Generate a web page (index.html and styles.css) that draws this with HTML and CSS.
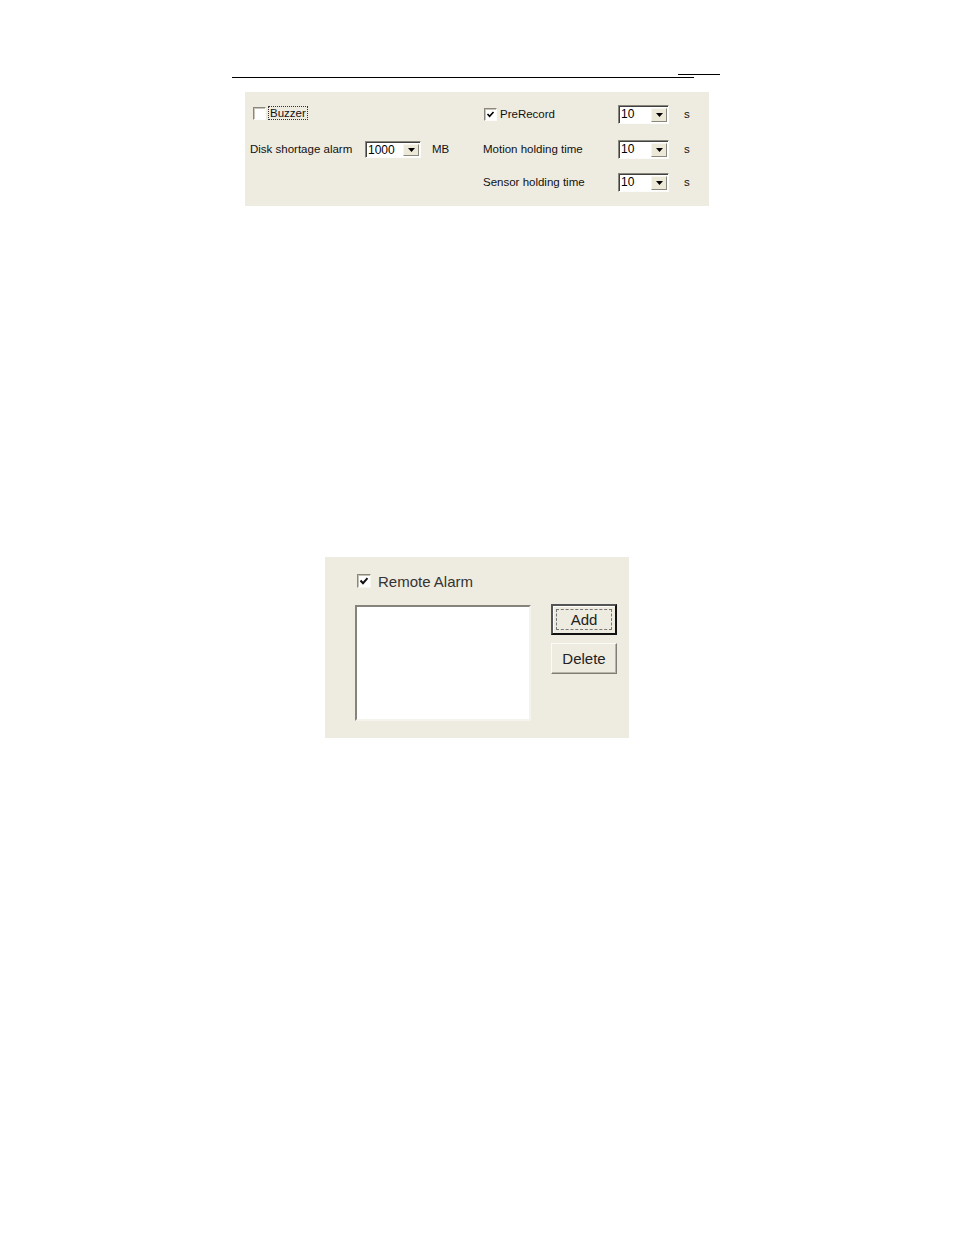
FILE: index.html
```html
<!DOCTYPE html>
<html>
<head>
<meta charset="utf-8">
<link rel="stylesheet" href="styles.css">
</head>
<body>
<div class="page">
  <div class="rules">
    <div class="rule-short"></div>
    <div class="rule-long"></div>
  </div>

  <div class="panel1">
    <div class="col-left">
      <div class="row row-buzzer">
        <span class="cb"></span>
        <span class="lbl focus">Buzzer</span>
      </div>
      <div class="row row-disk">
        <span class="lbl wide-l">Disk shortage alarm</span>
        <span class="combo combo-l"><span class="combo-val">1000</span><span class="combo-btn"><svg width="7" height="4" viewBox="0 0 7 4"><path d="M0 0H7L3.5 4Z" fill="#000"/></svg></span></span>
        <span class="unit unit-mb">MB</span>
      </div>
    </div>
    <div class="col-right">
      <div class="row row-r1">
        <span class="lbl wide-r"><span class="cb cb-checked"><svg width="9" height="9" viewBox="0 0 9 9"><path d="M1.5 4 L3.6 6.3 L7.5 2" stroke="#000" stroke-width="1.6" fill="none"/></svg></span><span class="cb-text">PreRecord</span></span>
        <span class="combo combo-r"><span class="combo-val">10</span><span class="combo-btn"><svg width="7" height="4" viewBox="0 0 7 4"><path d="M0 0H7L3.5 4Z" fill="#000"/></svg></span></span>
        <span class="unit">s</span>
      </div>
      <div class="row row-r2">
        <span class="lbl wide-r">Motion holding time</span>
        <span class="combo combo-r"><span class="combo-val">10</span><span class="combo-btn"><svg width="7" height="4" viewBox="0 0 7 4"><path d="M0 0H7L3.5 4Z" fill="#000"/></svg></span></span>
        <span class="unit">s</span>
      </div>
      <div class="row row-r3">
        <span class="lbl wide-r">Sensor holding time</span>
        <span class="combo combo-r"><span class="combo-val">10</span><span class="combo-btn"><svg width="7" height="4" viewBox="0 0 7 4"><path d="M0 0H7L3.5 4Z" fill="#000"/></svg></span></span>
        <span class="unit">s</span>
      </div>
    </div>
  </div>

  <div class="panel2">
    <div class="remote-row">
      <span class="cb2"><svg width="10" height="10" viewBox="0 0 10 10"><path d="M1.5 4.5 L4 7.2 L8.5 2.2" stroke="#111" stroke-width="2" fill="none"/></svg></span>
      <span class="remote-lbl">Remote Alarm</span>
    </div>
    <div class="remote-main">
      <div class="listbox"></div>
      <div class="btns">
        <div class="btn btn-default"><span class="btn-focus">Add</span></div>
        <div class="btn">Delete</div>
      </div>
    </div>
  </div>
</div>
</body>
</html>
```

FILE: styles.css
```css
html, body {
  margin: 0;
  padding: 0;
  background: #fff;
}
.page {
  width: 954px;
  height: 1235px;
  padding-top: 74px;
  box-sizing: border-box;
  font-family: "Liberation Sans", Arial, sans-serif;
  color: #111;
}
.rules {
  margin-left: 232px;
  width: 488px;
}
.rule-short {
  margin-left: 446px;
  width: 42px;
  height: 1px;
  background: #000;
}
.rule-long {
  margin-top: 2px;
  width: 462px;
  height: 1px;
  background: #000;
}

/* panel 1 */
.panel1 {
  margin-top: 14px;
  margin-left: 245px;
  width: 464px;
  height: 114px;
  background: #eeebe0;
  display: flex;
  font-size: 11.5px;
}
.col-left {
  width: 238px;
}
.col-right {
  flex: 1;
}
.row {
  height: 20px;
  display: flex;
  align-items: center;
}
.row-buzzer {
  margin-top: 11px;
  padding-left: 8px;
}
.row-disk {
  margin-top: 16px;
  padding-left: 5px;
}
.row-r1 { margin-top: 12px; }
.row-r2 { margin-top: 15px; }
.row-r3 { margin-top: 13px; }

.cb {
  width: 11px;
  height: 11px;
  background: #fff;
  border: 1px solid;
  border-color: #8a877c #fcfcfa #fcfcfa #8a877c;
  box-shadow: inset 1px 1px 0 #c8c5b8;
  display: inline-flex;
  align-items: center;
  justify-content: center;
  flex: none;
}
.lbl {
  white-space: nowrap;
}
.focus {
  margin-left: 3px;
  padding: 0 1px;
  outline: 1px dotted #333;
  line-height: 12px;
}
.wide-l { width: 115px; }
.wide-r {
  width: 135px;
  display: flex;
  align-items: center;
}
.cb-checked { margin-left: 1px; }
.cb-text { margin-left: 3px; }

.combo {
  display: flex;
  background: #fff;
  border: 1px solid;
  border-color: #8a877c #fcfcfa #fcfcfa #8a877c;
  box-shadow: inset 1px 1px 0 #404040;
  box-sizing: border-box;
  padding: 2px 1px 1px 2px;
}
.combo-l { width: 56px; height: 17px; }
.combo-r { width: 51px; height: 19px; }
.combo-val {
  flex: 1;
  font-size: 12px;
  line-height: 12px;
  color: #000;
}
.combo-btn {
  width: 16px;
  background: #ece9d8;
  border: 1px solid;
  border-color: #f7f6f1 #8a877c #8a877c #f7f6f1;
  box-sizing: border-box;
  display: flex;
  align-items: center;
  justify-content: center;
}
.unit { margin-left: 15px; }
.unit-mb { margin-left: 11px; }

/* panel 2 */
.panel2 {
  margin-top: 351px;
  margin-left: 325px;
  width: 304px;
  height: 181px;
  background: #eeebe0;
  padding: 16px 0 0 30px;
  box-sizing: border-box;
}
.remote-row {
  height: 16px;
  display: flex;
  align-items: center;
  padding-left: 2px;
}
.cb2 {
  width: 12px;
  height: 12px;
  background: #fff;
  border: 1px solid;
  border-color: #8a877c #f6f5f0 #f6f5f0 #8a877c;
  box-shadow: inset 1px 1px 0 #c4c1b4;
  display: flex;
  align-items: center;
  justify-content: center;
}
.remote-lbl {
  margin-left: 7px;
  font-size: 15px;
  color: #333;
}
.remote-main {
  margin-top: 15px;
  display: flex;
  align-items: flex-start;
}
.listbox {
  margin-top: 1px;
  width: 176px;
  height: 116px;
  background: #fff;
  border: 2px solid;
  border-color: #85837a #f4f3ec #f4f3ec #85837a;
  box-sizing: border-box;
}
.btns {
  margin-left: 20px;
  display: flex;
  flex-direction: column;
  gap: 8px;
}
.btn {
  width: 66px;
  height: 31px;
  box-sizing: border-box;
  background: #eeebe0;
  border: 1px solid;
  border-color: #fbfbf8 #7f7d75 #7f7d75 #fbfbf8;
  box-shadow: inset -1px -1px 0 #b8b5a8;
  display: flex;
  align-items: center;
  justify-content: center;
  font-size: 15px;
  color: #222;
}
.btn-default {
  border: 2px solid #222;
  border-color: #555 #111 #111 #555;
  box-shadow: inset 1px 1px 0 #fff;
  padding: 3px;
}
.btn-focus {
  flex: 1;
  align-self: stretch;
  border: 1px dashed #777;
  display: flex;
  align-items: center;
  justify-content: center;
}
```
